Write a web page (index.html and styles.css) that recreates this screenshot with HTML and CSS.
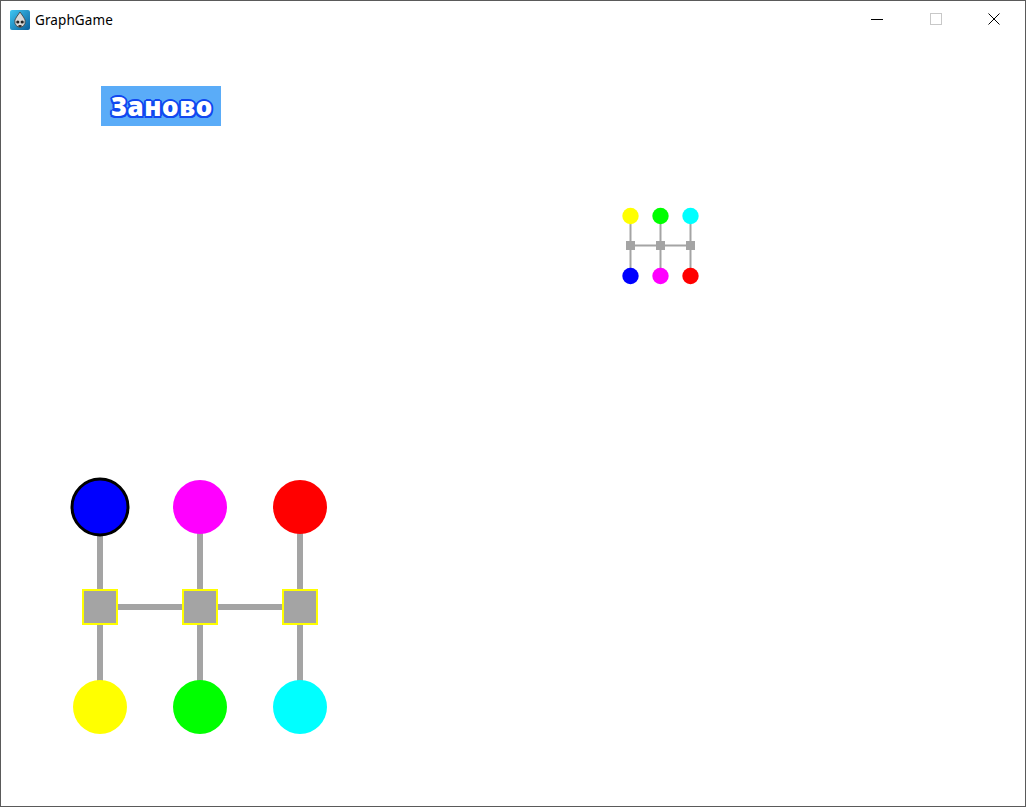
FILE: index.html
```html
<!DOCTYPE html>
<html lang="ru">
<head>
<meta charset="utf-8">
<title>GraphGame</title>
<link rel="stylesheet" href="styles.css">
</head>
<body>
<div class="window">
  <header class="titlebar">
    <div class="title">
      <svg class="app-icon" width="20" height="20" viewBox="0 0 20 20">
        <defs>
          <linearGradient id="ig" x1="0" y1="0" x2="1" y2="1">
            <stop offset="0" stop-color="#3fc7f2"/>
            <stop offset="1" stop-color="#0a5f9c"/>
          </linearGradient>
        </defs>
        <rect x="0" y="0" width="20" height="20" rx="2" fill="url(#ig)"/>
        <path d="M10 2 L13.5 7 Q16 10 15 13.5 Q14 17 10 17.5 Q6 17 5 13.5 Q4 10 6.5 7 Z" fill="#d8d8d8" stroke="#3a3a3a" stroke-width="0.8"/>
        <circle cx="7.8" cy="12" r="1.6" fill="#222"/>
        <circle cx="12.2" cy="12" r="1.6" fill="#222"/>
        <rect x="8.5" y="15" width="3" height="2" fill="#333"/>
      </svg>
      <span class="title-text">GraphGame</span>
    </div>
    <div class="controls">
      <div class="ctl"><svg width="12" height="12" viewBox="0 0 12 12"><line x1="0" y1="6.5" x2="12" y2="6.5" stroke="#000" stroke-width="1"/></svg></div>
      <div class="ctl"><svg width="12" height="12" viewBox="0 0 12 12"><rect x="0.5" y="0.5" width="11" height="11" fill="none" stroke="#c8c8c8" stroke-width="1"/></svg></div>
      <div class="ctl"><svg width="12" height="12" viewBox="0 0 12 12"><path d="M0.5 0.5 L11.5 11.5 M11.5 0.5 L0.5 11.5" stroke="#000" stroke-width="1"/></svg></div>
    </div>
  </header>
  <main class="client">
    <div class="toolbar">
      <button class="restart">Заново</button>
    </div>
    <svg class="canvas" width="1024" height="768" viewBox="0 0 1024 768">
      <defs>
        <filter id="soft" x="-20%" y="-20%" width="140%" height="140%">
          <feGaussianBlur stdDeviation="0.6"/>
        </filter>
      </defs>
      <!-- target (small) graph -->
      <g class="mini" transform="translate(-1,-38)">
        <g stroke="#a4a4a4" stroke-width="2">
          <line x1="630.5" y1="216" x2="630.5" y2="276"/>
          <line x1="660.5" y1="216" x2="660.5" y2="276"/>
          <line x1="690.5" y1="216" x2="690.5" y2="276"/>
          <line x1="630.5" y1="245.5" x2="690.5" y2="245.5"/>
        </g>
        <g fill="#a4a4a4">
          <rect x="626" y="241" width="9" height="9"/>
          <rect x="656" y="241" width="9" height="9"/>
          <rect x="686" y="241" width="9" height="9"/>
        </g>
        <circle cx="630.5" cy="216" r="8.2" fill="#ffff00"/>
        <circle cx="660.5" cy="216" r="8.2" fill="#00ff00"/>
        <circle cx="690.5" cy="216" r="8.2" fill="#00ffff"/>
        <circle cx="630.5" cy="276" r="8.2" fill="#0000ff"/>
        <circle cx="660.5" cy="276" r="8.2" fill="#ff00ff"/>
        <circle cx="690.5" cy="276" r="8.2" fill="#ff0000"/>
      </g>
      <!-- player (big) graph -->
      <g class="big" transform="translate(-1,-38)">
        <g stroke="#a4a4a4" stroke-width="6">
          <line x1="100" y1="507" x2="100" y2="707"/>
          <line x1="200" y1="507" x2="200" y2="707"/>
          <line x1="300" y1="507" x2="300" y2="707"/>
          <line x1="100" y1="607" x2="300" y2="607"/>
        </g>
        <g fill="#a4a4a4" stroke="#ffff00" stroke-width="2">
          <rect x="83" y="590" width="34" height="34"/>
          <rect x="183" y="590" width="34" height="34"/>
          <rect x="283" y="590" width="34" height="34"/>
        </g>
        <g filter="url(#soft)">
          <circle cx="100" cy="507" r="28" fill="#0000ff" stroke="#000" stroke-width="3"/>
          <circle cx="200" cy="507" r="27" fill="#ff00ff"/>
          <circle cx="300" cy="507" r="27" fill="#ff0000"/>
          <circle cx="100" cy="707" r="27" fill="#ffff00"/>
          <circle cx="200" cy="707" r="27" fill="#00ff00"/>
          <circle cx="300" cy="707" r="27" fill="#00ffff"/>
        </g>
      </g>
    </svg>
  </main>
</div>
</body>
</html>
```
FILE: styles.css
```css
html, body {
  margin: 0;
  padding: 0;
  background: #ffffff;
}

.window {
  width: 1024px;
  height: 805px;
  border: 1px solid #5a5a5a;
  background: #ffffff;
  display: flex;
  flex-direction: column;
  overflow: hidden;
}

.titlebar {
  height: 37px;
  display: flex;
  align-items: flex-start;
  justify-content: space-between;
  flex: none;
}

.title {
  display: flex;
  align-items: center;
  gap: 5px;
  padding: 9px 0 0 9px;
}

.app-icon {
  display: block;
}

.title-text {
  font-family: "Segoe UI", "Noto Sans", "Open Sans", sans-serif;
  font-size: 13.5px;
  letter-spacing: 0.1px;
  color: #000000;
  line-height: 20px;
}

.controls {
  display: flex;
  padding-right: 3px;
}

.ctl {
  width: 58px;
  height: 36px;
  display: flex;
  justify-content: center;
  align-items: flex-start;
  padding-top: 12px;
  box-sizing: border-box;
}

.ctl svg {
  display: block;
}

.controls .ctl:nth-child(1) { margin-right: 1px; }
.controls .ctl:nth-child(3) { width: 57px; }

.client {
  position: relative;
  flex: 1;
}

.toolbar {
  padding: 48px 0 0 100px;
  position: relative;
  z-index: 1;
}

.restart {
  display: block;
  width: 120px;
  height: 40px;
  border: none;
  margin: 0;
  padding: 0 0 0 10px;
  background: #5aacf8;
  color: #ffffff;
  font-family: "Noto Sans", "Open Sans", sans-serif;
  font-weight: 900;
  font-size: 26px;
  letter-spacing: 0.6px;
  text-align: left;
  line-height: 40px;
  text-shadow:
    2px 0 0 #1048f0, -2px 0 0 #1048f0, 0 2px 0 #1048f0, 0 -2px 0 #1048f0,
    1.5px 1.5px 0 #1048f0, -1.5px 1.5px 0 #1048f0, 1.5px -1.5px 0 #1048f0, -1.5px -1.5px 0 #1048f0;
}

.canvas {
  position: absolute;
  left: 0;
  top: 0;
  overflow: visible;
}
```
